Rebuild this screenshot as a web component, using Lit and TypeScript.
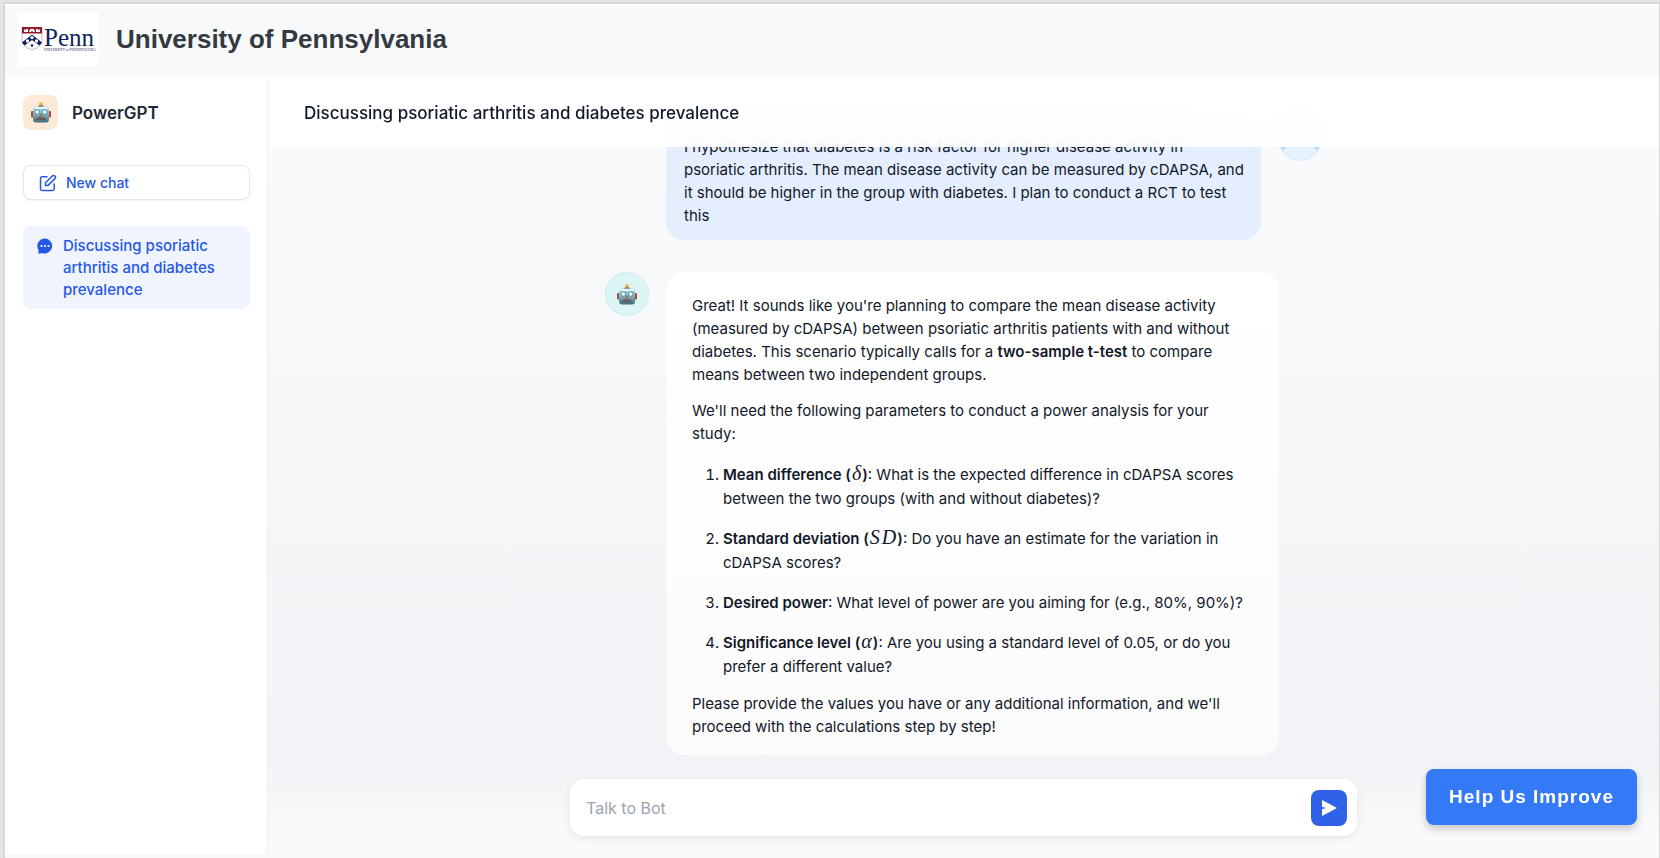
import { LitElement, html, css, svg } from "lit";
import { customElement, property, state } from "lit/decorators.js";

const robot = html`<svg class="robot" viewBox="0 0 40 42" aria-hidden="true">
  <defs>
    <linearGradient id="face" x1="0" y1="0" x2="0" y2="1">
      <stop offset="0" stop-color="#c4dde0" />
      <stop offset="0.45" stop-color="#8db4ba" />
      <stop offset="1" stop-color="#3f6a78" />
    </linearGradient>
  </defs>
  <circle cx="20" cy="4.5" r="4" fill="#f0b73a" />
  <path d="M14 10q0-3 3-3h6q3 0 3 3z" fill="#5c4a86" />
  <rect x="0" y="18" width="6" height="13" rx="2" fill="#b0483f" />
  <rect x="34" y="18" width="6" height="13" rx="2" fill="#b0483f" />
  <path d="M9 9h22q5 0 5 6v19q0 7-6 7H10q-6 0-6-7V15q0-6 5-6z" fill="url(#face)" />
  <path d="M9 10h22q4 0 4 4H5q0-4 4-4z" fill="#e6f1f2" />
  <circle cx="12.500" cy="20" r="5.500" fill="#3fa3c4" />
  <circle cx="27.500" cy="20" r="5.500" fill="#3fa3c4" />
  <circle cx="12.500" cy="20" r="3.600" fill="#fff" />
  <circle cx="27.500" cy="20" r="3.600" fill="#fff" />
  <path d="M20 22l3 6h-6z" fill="#d0483c" />
  <path d="M10 36q1-6 10-6t10 6z" fill="#4a5458" />
  <path d="M14 35v-3M18 35v-4M22 35v-4M26 35v-3" stroke="#c47a6a" stroke-width="1.400" />
</svg>`;

const robotStyles = css`
  .robot {
    display: block;
    width: 20px;
    height: 21px;
  }
`;

@customElement("brand-header")
class BrandHeader extends LitElement {
  static styles = css`
    :host {
      display: flex;
      align-items: flex-start;
      gap: 17px;
      padding: 6px 12px 11px;
      background: #f8f9fb;
    }
    .logo {
      display: block;
      width: 82px;
      height: 54px;
      background: #fff;
    }
    .penn {
      font-family: "Liberation Serif", serif;
      fill: #0f1f5c;
    }
    .name {
      margin: 0;
      font: 700 26px/54px "Liberation Sans", Arial, sans-serif;
      color: #343a40;
    }
  `;
  render() {
    return html`
      <svg class="logo" viewBox="0 0 82 54" role="img" aria-label="Penn">
        <path d="M5 15.500h20v13q0 6-10 9.500-10-3.500-10-9.500z" fill="#fff" stroke="#8790b0" stroke-width=".6" />
        <path d="M5 15h20v6.500H5z" fill="#8f1c2c" />
        <path d="M7 20v-3l2 1.500V17h2v3zM12 20l1-3h4l1 3h-2l-1-1.500-1 1.500zM19 20v-3h2v1.500l2-1.500v3z" fill="#fff" />
        <path d="M15 22.500l10 8-2.500 3-7.500-5.500-7.500 5.500L5 30.500z" fill="#0f1f5c" />
        ${[[15, 25.6], [10.5, 29], [19.5, 29]].map(
          ([x, y]) => svg`<circle cx=${x} cy=${y} r="1.700" fill="#fff" />`
        )}
        <circle cx="15" cy="33.500" r="1.300" fill="#0f1f5c" />
        <text class="penn" x="27" y="34" font-size="25">Penn</text>
        <text class="penn" x="27" y="39" font-size="3.5">UNIVERSITY of PENNSYLVANIA</text>
      </svg>
      <h1 class="name">University of Pennsylvania</h1>
    `;
  }
}

@customElement("chat-sidebar")
class ChatSidebar extends LitElement {
  @property({ type: Array }) chats: string[] = [];

  static styles = [
    robotStyles,
    css`
      :host {
        display: flex;
        flex-direction: column;
        box-sizing: border-box;
        padding: 18px 17px 18px 18px;
        background: #fff;
        border-right: 1px solid #eef0f4;
      }
      .bot {
        display: flex;
        align-items: center;
        gap: 14px;
        margin-bottom: 35px;
      }
      .tile {
        display: grid;
        place-items: center;
        width: 35px;
        height: 35px;
        border-radius: 8px;
        background: #fdead7;
      }
      .title {
        margin: 0;
        font-size: 17px;
        font-weight: 600;
        line-height: 24px;
        color: #1f2937;
      }
      .new {
        display: flex;
        align-items: center;
        gap: 9px;
        height: 35px;
        padding: 0 15px;
        margin-bottom: 26px;
        border: 1px solid #e3e5e9;
        border-radius: 8px;
        background: #fff;
        box-shadow: 0 1px 2px rgba(0, 0, 0, 0.06);
        font: inherit;
        font-size: 14px;
        font-weight: 500;
        color: #2558e6;
      }
      .pencil {
        width: 18px;
        height: 18px;
      }
      .list {
        display: grid;
        gap: 4px;
      }
      .chat {
        display: flex;
        align-items: flex-start;
        gap: 10px;
        padding: 9px 14px 8px;
        border-radius: 8px;
        background: #eff4ff;
        font-size: 15px;
        font-weight: 500;
        line-height: 22px;
        color: #2558e6;
        text-decoration: none;
      }
      .bubble {
        flex: none;
        width: 16px;
        height: 16px;
        margin-top: 3px;
      }
    `,
  ];
  render() {
    return html`
      <div class="bot">
        <span class="tile">${robot}</span>
        <h2 class="title">PowerGPT</h2>
      </div>
      <button class="new" type="button">
        <svg class="pencil" viewBox="0 0 18 18" fill="none" stroke="currentColor" stroke-width="1.500" stroke-linecap="round" stroke-linejoin="round" aria-hidden="true">
          <path d="M8 2.800H3.200q-1.700 0-1.700 1.700v10.300q0 1.700 1.700 1.700h10.300q1.700 0 1.700-1.700V10" />
          <path d="M6.500 11.500v-2.700l7-7a1.400 1.400 0 0 1 2 0l.6.600a1.400 1.400 0 0 1 0 2l-7 7z" />
        </svg>
        New chat
      </button>
      <nav class="list" aria-label="Chats">
        ${this.chats.map(
          (name) => html`<a class="chat" href="#">
            <svg class="bubble" viewBox="0 0 16 16" aria-hidden="true">
              <path d="M8 .5A7.500 7.500 0 1 1 5 15q-1.500.8-4 .5 .8-1.500.5-3.500A7.500 7.500 0 0 1 8 .5z" fill="currentColor" />
              <g fill="#fff"><circle cx="4.500" cy="8" r="1.100" /><circle cx="8" cy="8" r="1.100" /><circle cx="11.500" cy="8" r="1.100" /></g>
            </svg>
            <span>${name}</span>
          </a>`
        )}
      </nav>
    `;
  }
}

@customElement("chat-message")
class ChatMessage extends LitElement {
  @property({ reflect: true }) from: "user" | "bot" = "bot";

  static styles = [
    robotStyles,
    css`
      :host {
        display: flex;
        align-items: flex-start;
        gap: 17px;
        padding-right: 43px;
      }
      :host([from="user"]) {
        padding: 0 0 0 61px;
      }
      .avatar {
        flex: none;
        display: grid;
        place-items: center;
        box-sizing: border-box;
        width: 44px;
        height: 44px;
        border: 1px solid #d0ecec;
        border-radius: 50%;
        background: #dcf5f5;
        overflow: hidden;
      }
      .avatar.user {
        border-color: #e6f2ff;
        background: #b5dbff;
      }
      .person {
        width: 42px;
        height: 42px;
      }
      .body {
        flex: 1;
        min-width: 0;
        box-sizing: border-box;
        padding: 22px 26px 17px;
        border-radius: 18px;
        background: linear-gradient(#ffffff, #fbfbfc);
        font-size: 15px;
        line-height: 23px;
        color: #111827;
      }
      .body.user {
        padding: 18px 14px 13px 18px;
        background: #e4eefe;
      }
    `,
  ];
  render() {
    return this.from === "user"
      ? html`
          <div class="body user"><slot></slot></div>
          <span class="avatar user">
            <svg class="person" viewBox="0 0 42 42" aria-hidden="true">
              <circle cx="21" cy="15" r="8" fill="#e6f3ff" />
              <path d="M2 35l7-8q12-6 24 0l7 8v7H2z" fill="#e6f3ff" />
            </svg>
          </span>
        `
      : html`
          <span class="avatar">${robot}</span>
          <div class="body"><slot></slot></div>
        `;
  }
}

@customElement("app-root")
class AppRoot extends LitElement {
  @state() private draft = "";
  private topic = "Discussing psoriatic arthritis and diabetes prevalence";

  static styles = css`
    :host {
      display: block;
      box-sizing: border-box;
      height: 100vh;
      padding: 2px 0 0 3px;
      background: #e4e4e4;
      font-family: Inter, "Open Sans", sans-serif;
    }
    .window {
      display: flex;
      flex-direction: column;
      box-sizing: border-box;
      height: 100%;
      border: 2px solid #d8d8d8;
      border-width: 2px 1px 0 2px;
      background: #f9f9fa;
      overflow: hidden;
    }
    .brand {
      border-top: 2px solid #fff;
    }
    .work {
      flex: 1;
      display: grid;
      grid-template-columns: 263px minmax(0, 1fr);
      min-height: 0;
      margin-bottom: 4px;
    }
    .chat {
      display: flex;
      flex-direction: column;
      min-height: 0;
      background: linear-gradient(#fafbfc, #f2f3f6 88%, #f9fafb 98%);
    }
    .head {
      flex: none;
      z-index: 1;
      padding: 24px 36px 22px;
      background: rgba(255, 255, 255, 0.9);
      backdrop-filter: blur(16px);
    }
    .topic {
      margin: 0;
      font-size: 17px;
      font-weight: 500;
      line-height: 24px;
      color: #111827;
    }
    .log {
      flex: 1;
      display: flex;
      flex-direction: column;
      justify-content: flex-end;
      align-items: center;
      gap: 32px;
      min-height: 0;
      margin-top: -70px;
      overflow: hidden;
    }
    .row {
      width: 100%;
      max-width: 717px;
      box-sizing: border-box;
    }
    .para {
      margin: 0 0 13px;
    }
    .para.last {
      margin: 0;
    }
    .params {
      margin: 18px 0 13px;
      padding-left: 31px;
      line-height: 24px;
    }
    .param {
      margin-bottom: 16px;
    }
    .param:last-child {
      margin-bottom: 0;
    }
    .strong {
      font-weight: 600;
    }
    .math {
      padding: 0 1px;
      font: italic 400 20px/20px "Liberation Serif", serif;
    }
    .compose {
      flex: none;
      display: flex;
      align-items: center;
      align-self: center;
      box-sizing: border-box;
      width: 100%;
      max-width: 787px;
      margin: 24px 0 18px;
      padding: 10px;
      border-radius: 14px;
      background: #fff;
      box-shadow: 0 3px 8px rgba(0, 0, 0, 0.08);
    }
    .field {
      flex: 1;
      min-width: 0;
      height: 37px;
      padding: 0 6px;
      border: 0;
      outline: 0;
      background: none;
      font: 400 16px/24px Inter, "Open Sans", sans-serif;
      color: #111827;
    }
    .field::placeholder {
      color: #9ca3af;
      opacity: 1;
    }
    .send {
      display: grid;
      place-items: center;
      width: 36px;
      height: 36px;
      padding: 0;
      border: 0;
      border-radius: 8px;
      background: #2f62e9;
    }
    .plane {
      width: 16px;
      height: 16px;
    }
    .help {
      position: fixed;
      right: 23px;
      bottom: 33px;
      z-index: 2;
      height: 56px;
      padding: 0 23px;
      border: 0;
      border-radius: 8px;
      background: #3479f6;
      box-shadow: 0 4px 8px rgba(0, 0, 0, 0.2);
      font: 700 19px/24px "Liberation Sans", Arial, sans-serif;
      letter-spacing: 1px;
      color: #fff;
    }
  `;

  render() {
    return html`
      <div class="window">
        <brand-header class="brand"></brand-header>
        <div class="work">
          <chat-sidebar .chats=${[this.topic]}></chat-sidebar>
          <main class="chat">
            <header class="head"><h2 class="topic">${this.topic}</h2></header>
            <div class="log">
              <chat-message class="row" from="user">
                I hypothesize that diabetes is a risk factor for higher disease activity in
                psoriatic arthritis. The mean disease activity can be measured by cDAPSA, and
                it should be higher in the group with diabetes. I plan to conduct a RCT to test
                this
              </chat-message>
              <chat-message class="row" from="bot">
                <p class="para">
                  Great! It sounds like you're planning to compare the mean disease activity
                  (measured by cDAPSA) between psoriatic arthritis patients with and without
                  diabetes. This scenario typically calls for a
                  <strong class="strong">two-sample t-test</strong> to compare means between
                  two independent groups.
                </p>
                <p class="para">
                  We'll need the following parameters to conduct a power analysis for your
                  study:
                </p>
                <ol class="params">
                  <li class="param">
                    <strong class="strong">Mean difference (<i class="math">δ</i>)</strong>:
                    What is the expected difference in cDAPSA scores between the two groups
                    (with and without diabetes)?
                  </li>
                  <li class="param">
                    <strong class="strong">Standard deviation (<i class="math">S</i><i class="math">D</i>)</strong>:
                    Do you have an estimate for the variation in cDAPSA scores?
                  </li>
                  <li class="param">
                    <strong class="strong">Desired power</strong>: What level of power are you
                    aiming for (e.g., 80%, 90%)?
                  </li>
                  <li class="param">
                    <strong class="strong">Significance level (<i class="math">α</i>)</strong>:
                    Are you using a standard level of 0.05, or do you prefer a different value?
                  </li>
                </ol>
                <p class="para last">
                  Please provide the values you have or any additional information, and we'll
                  proceed with the calculations step by step!
                </p>
              </chat-message>
            </div>
            <form class="compose" @submit=${(e: Event) => e.preventDefault()}>
              <input
                class="field"
                type="text"
                aria-label="Talk to Bot"
                placeholder="Talk to Bot"
                .value=${this.draft}
                @input=${(e: Event) => (this.draft = (e.target as HTMLInputElement).value)}
              />
              <button class="send" type="submit" aria-label="Send">
                <svg class="plane" viewBox="0 0 16 16" aria-hidden="true">
                  <path d="M1 0l15 8-15 8V9l5-1-5-1z" fill="#fff" />
                </svg>
              </button>
            </form>
          </main>
        </div>
      </div>
      <button class="help" type="button">Help Us Improve</button>
    `;
  }
}
